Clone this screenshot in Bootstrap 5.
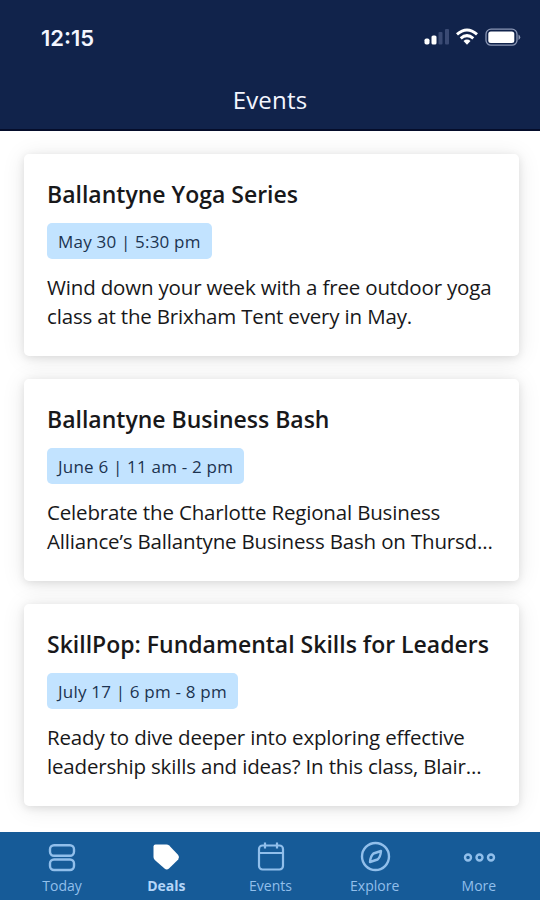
<!DOCTYPE html>
<html lang="en">
<head>
<meta charset="utf-8">
<meta name="viewport" content="width=device-width, initial-scale=1">
<title>Events</title>
<link href="https://cdn.jsdelivr.net/npm/bootstrap@5.3.0/dist/css/bootstrap.min.css" rel="stylesheet">
<style>
body{font-family:"Open Sans","Noto Sans",sans-serif;background:#fff;color:#18181a;overflow:hidden}
.screen{width:540px;height:900px}
.top-bar{height:131px;background:#11234b;border-bottom:2px solid #050d2b;color:#f4f6ff}
.status{height:74px;padding:2px 19px 0 41px}
.clock{font:600 22px/1 Inter,sans-serif}
.status svg{margin-top:-2px}
.screen-title{font-size:24px;line-height:52px;letter-spacing:.2px}
.feed{padding:23px 21px 0 24px;gap:23px}
.event{height:202px;border:0;border-radius:5px;padding:24px 0 0 23px;box-shadow:0 2px 8px rgba(0,0,0,.1),0 2px 24px rgba(0,0,0,.09)}
.event h2{font-size:23px;font-weight:600;line-height:32px;margin:0 0 13px;white-space:nowrap}
.when{height:36px;line-height:37px;padding:0 11px;border-radius:5px;background:#c2e3ff;color:#1c3350;font-size:17px;letter-spacing:.2px;white-space:nowrap}
.event p{font-size:20.5px;line-height:29px;letter-spacing:-.17px;margin:14px 0 0;white-space:nowrap}
.tabs{height:68px;background:#165b98;padding:0 9px 0 10px}
.tab{color:#91bfeb;font-size:14px;font-weight:500;line-height:18px;padding-top:8px}
.tab.active{color:#b4d6f8;font-weight:700}
.tab svg{display:block;margin-bottom:3px}
</style>
</head>
<body>
<div class="screen d-flex flex-column">
<header class="top-bar flex-shrink-0">
<div class="status d-flex align-items-center justify-content-between">
<span class="clock">12:15</span>
<svg width="98" height="20" viewBox="0 0 98 20" fill="#fff">
<rect x="1.500" y="11.500" width="5" height="6" rx="1.800"/><rect x="8.500" y="8.500" width="5" height="9" rx="1.600"/>
<g fill="#3a4a73"><rect x="15.500" y="5" width="4" height="12.500" rx="1"/><rect x="22" y="2" width="4" height="15.500" rx="1"/></g>
<g fill="none" stroke="#fff" stroke-width="3"><path d="M34 7.300Q44-1.400 54 7.300"/><path d="M37.700 11.300Q44 6 50.300 11.300"/></g><path d="M40.500 14q3.500-2.800 7 0l-3.500 3.800z"/>
<rect x="63" y="2.200" width="31" height="16" rx="5" fill="none" stroke="#8c98b6" stroke-width="1.300"/><rect x="65.300" y="4.500" width="26" height="11.500" rx="2.500"/><path d="M95.500 7.500q3.500 2.700 0 5.500z" fill="#8c98b6"/>
</svg>
</div>
<div class="screen-title text-center">Events</div>
</header>
<main class="feed d-flex flex-column flex-grow-1">
<article class="card event"><h2>Ballantyne Yoga Series</h2><div class="when align-self-start">May 30 | 5:30 pm</div><p>Wind down your week with a free outdoor yoga<br>class at the Brixham Tent every in May.</p></article>
<article class="card event"><h2>Ballantyne Business Bash</h2><div class="when align-self-start">June 6 | 11 am - 2 pm</div><p>Celebrate the Charlotte Regional Business<br>Alliance’s Ballantyne Business Bash on Thursd...</p></article>
<article class="card event"><h2>SkillPop: Fundamental Skills for Leaders</h2><div class="when align-self-start">July 17 | 6 pm - 8 pm</div><p>Ready to dive deeper into exploring effective<br>leadership skills and ideas? In this class, Blair...</p></article>
</main>
<nav class="tabs d-flex flex-shrink-0">
<div class="tab col d-flex flex-column align-items-center"><svg width="34" height="34" viewBox="0 0 34 34" fill="none" stroke="currentColor" stroke-width="2.400"><rect x="5" y="5.200" width="24" height="10.500" rx="4"/><rect x="5" y="19.500" width="24" height="10.500" rx="4"/></svg>Today</div>
<div class="tab active col d-flex flex-column align-items-center"><svg width="34" height="34" viewBox="0 0 34 34" fill="#fff"><path d="M4.500 6.500Q4.500 4.500 6.500 4.500H17.500Q19 4.500 20.200 5.600L29.200 15Q31 17.300 29.200 19.500L20 28.500Q17.800 30.500 15.500 28.600L5.800 20Q4.500 18.700 4.500 17z"/></svg>Deals</div>
<div class="tab col d-flex flex-column align-items-center"><svg width="34" height="34" viewBox="0 0 34 34" fill="none" stroke="currentColor" stroke-width="2.200"><rect x="5" y="5.500" width="24" height="24" rx="3.500"/><path d="M5 13H29M11 2.500V8.500M23 2.500V8.500"/></svg>Events</div>
<div class="tab col d-flex flex-column align-items-center"><svg width="34" height="34" viewBox="0 0 34 34" fill="none" stroke="currentColor" stroke-width="2.400" stroke-linejoin="round"><circle cx="17.500" cy="16.500" r="13.500"/><path d="M23 11L15.500 13.500Q12.500 16 12 22L19.500 19.500Q22.500 17 23 11z"/></svg>Explore</div>
<div class="tab col d-flex flex-column align-items-center"><svg width="34" height="34" viewBox="0 0 34 34" fill="none" stroke="currentColor" stroke-width="2.400"><circle cx="6" cy="17.500" r="3"/><circle cx="17.500" cy="17.500" r="3"/><circle cx="29" cy="17.500" r="3"/></svg>More</div>
</nav>
</div>
<script src="https://cdn.jsdelivr.net/npm/bootstrap@5.3.0/dist/js/bootstrap.bundle.min.js"></script>
</body>
</html>
